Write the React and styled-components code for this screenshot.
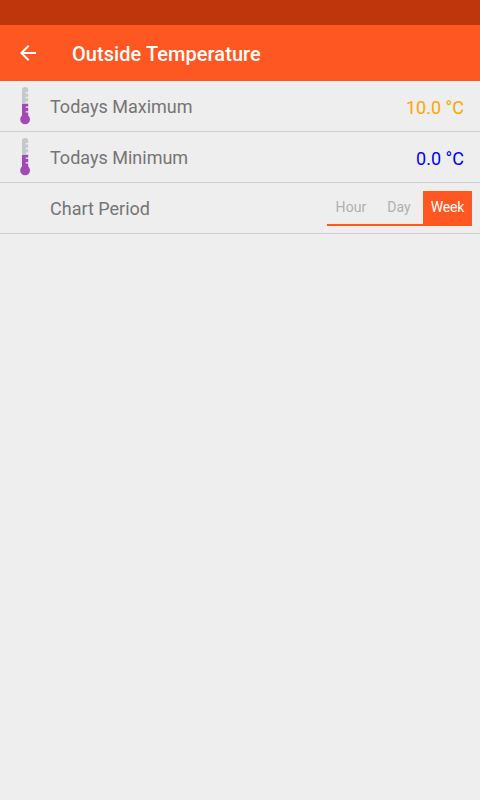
import React from "react";
import styled, { createGlobalStyle } from "styled-components";

const GlobalStyle = createGlobalStyle`
  body { margin: 0; background: #eeeeee; }
  * { box-sizing: border-box; }
`;

const Screen = styled.main`
  width: 480px;
  height: 800px;
  overflow: hidden;
  background: #eeeeee;
  font-family: Roboto, sans-serif;
`;

const StatusBar = styled.div`
  height: 25px;
  background: #bf360c;
`;

const Toolbar = styled.header`
  display: flex;
  align-items: center;
  height: 56px;
  padding-left: 16px;
  background: #ff5722;
  color: #ffffff;
`;

const BackButton = styled.button`
  display: flex;
  width: 24px;
  height: 24px;
  margin: 0 32px 0 0;
  padding: 0;
  border: 0;
  background: none;
`;

const Title = styled.h1`
  margin: 2px 0 0;
  font-size: 20px;
  line-height: 24px;
  font-weight: 500;
  letter-spacing: 0.06px;
`;

const Row = styled.div`
  display: flex;
  align-items: center;
  height: 51px;
  padding-right: ${(p) => p.$end}px;
  border-bottom: 1px solid #d0d0d0;
`;

const IconSlot = styled.div`
  display: flex;
  justify-content: center;
  width: 50px;
`;

const Label = styled.span`
  flex: 1;
  color: #757575;
  font-size: 18px;
  line-height: 22px;
  padding-top: 2px;
`;

const Reading = styled.span`
  color: ${(p) => p.$color};
  font-size: 18px;
  line-height: 22px;
  padding-top: 3px;
`;

const Periods = styled.div`
  display: flex;
  height: 35px;
  margin-top: 1px;
`;

const Period = styled.button`
  width: ${(p) => p.$width}px;
  padding: 0 0 2px;
  border: 0;
  border-bottom: 2px solid #ff5722;
  background: ${(p) => (p.$active ? "#ff5722" : "transparent")};
  color: ${(p) => (p.$active ? "#ffffff" : "#b0b0b0")};
  font: 400 14px/16px Roboto, sans-serif;
  letter-spacing: ${(p) => (p.$active ? "-0.2px" : "0.1px")};
`;

const Thermometer = () => (
  <svg width="12" height="40" viewBox="0 0 12 40">
    <path d="M3 4.2a3.1 3.1 0 0 1 6.2 0V18H3z" fill="#c3c9cc" />
    <path d="M3 18h6.2v11.6a4.9 4.9 0 1 1-6.2 0z" fill="#a349b5" />
    <path
      d="M6.7 6.7h3.3M6.7 11.5h3.3M6.7 16.3h3.3M6.7 21.1h3.3M6.7 25.9h3.3"
      stroke="#eeeeee"
      strokeWidth="1.4"
    />
  </svg>
);

export default function App() {
  return (
    <Screen>
      <GlobalStyle />
      <StatusBar />
      <Toolbar>
        <BackButton aria-label="Back">
          <svg width="24" height="24" viewBox="0 0 24 24">
            <path fill="#fff" d="M20 11H7.83l5.59-5.59L12 4l-8 8 8 8 1.41-1.41L7.83 13H20v-2z" />
          </svg>
        </BackButton>
        <Title>Outside Temperature</Title>
      </Toolbar>
      <Row $end={16}>
        <IconSlot><Thermometer /></IconSlot>
        <Label>Todays Maximum</Label>
        <Reading $color="#ffa500">10.0 °C</Reading>
      </Row>
      <Row $end={16}>
        <IconSlot><Thermometer /></IconSlot>
        <Label>Todays Minimum</Label>
        <Reading $color="#0000ff">0.0 °C</Reading>
      </Row>
      <Row $end={8}>
        <IconSlot />
        <Label>Chart Period</Label>
        <Periods>
          <Period $width={48}>Hour</Period>
          <Period $width={48}>Day</Period>
          <Period $width={49} $active>Week</Period>
        </Periods>
      </Row>
    </Screen>
  );
}
